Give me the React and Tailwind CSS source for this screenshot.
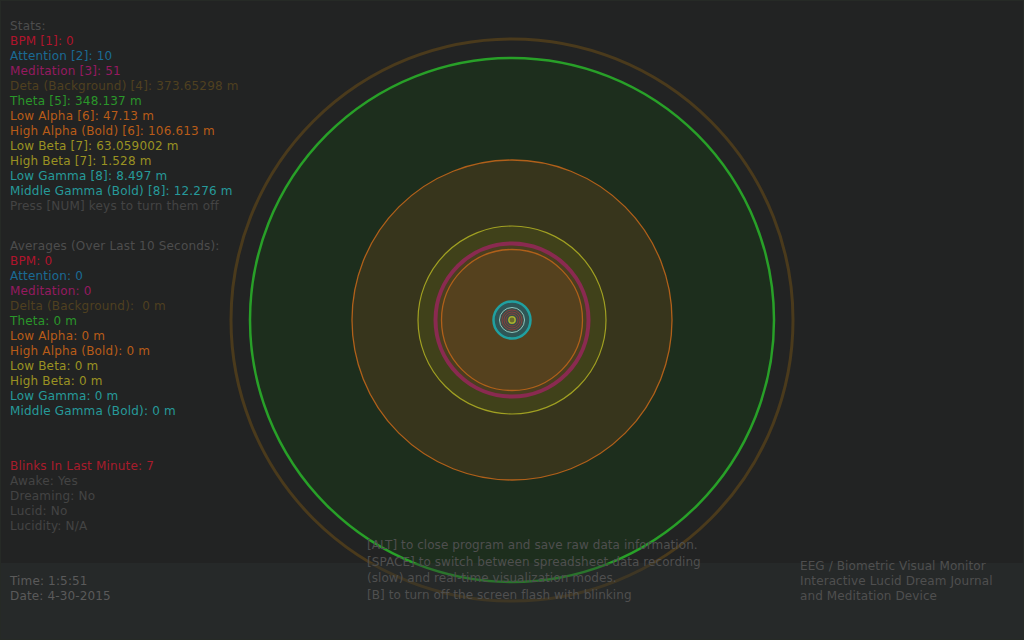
import React from "react";

const stats = [
  ["Stats:", "text-[#4d4d4d]"],
  ["BPM [1]: 0", "text-[#b0142c]"],
  ["Attention [2]: 10", "text-[#1a6a94]"],
  ["Meditation [3]: 51", "text-[#951a60]"],
  ["Deta (Background) [4]: 373.65298 m", "text-[#4f4020]"],
  ["Theta [5]: 348.137 m", "text-[#2a962a]"],
  ["Low Alpha [6]: 47.13 m", "text-[#b85c18]"],
  ["High Alpha (Bold) [6]: 106.613 m", "text-[#b85c18]"],
  ["Low Beta [7]: 63.059002 m", "text-[#9a9222]"],
  ["High Beta [7]: 1.528 m", "text-[#9a9222]"],
  ["Low Gamma [8]: 8.497 m", "text-[#269a9a]"],
  ["Middle Gamma (Bold) [8]: 12.276 m", "text-[#269a9a]"],
  ["Press [NUM] keys to turn them off", "text-[#444444]"],
];

const avgs = [
  ["Averages (Over Last 10 Seconds):", "text-[#4d4d4d]"],
  ["BPM: 0", "text-[#b0142c]"],
  ["Attention: 0", "text-[#1a6a94]"],
  ["Meditation: 0", "text-[#951a60]"],
  ["Delta (Background):  0 m", "text-[#4f4020]"],
  ["Theta: 0 m", "text-[#2a962a]"],
  ["Low Alpha: 0 m", "text-[#b85c18]"],
  ["High Alpha (Bold): 0 m", "text-[#b85c18]"],
  ["Low Beta: 0 m", "text-[#9a9222]"],
  ["High Beta: 0 m", "text-[#9a9222]"],
  ["Low Gamma: 0 m", "text-[#269a9a]"],
  ["Middle Gamma (Bold): 0 m", "text-[#269a9a]"],
];

const blinks = [
  ["Blinks In Last Minute: 7", "text-[#a81c2c]"],
  ["Awake: Yes", "text-[#444444]"],
  ["Dreaming: No", "text-[#444444]"],
  ["Lucid: No", "text-[#444444]"],
  ["Lucidity: N/A", "text-[#444444]"],
];

function Block({ items, className = "" }) {
  return (
    <div className={"flex flex-col tracking-[0.18px] " + className}>
      {items.map(([t, c], i) => (
        <div key={i} className={"h-[15px] leading-[15px] whitespace-pre " + c}>
          {t}
        </div>
      ))}
    </div>
  );
}

function Rings() {
  const cx = 512,
    cy = 320;
  return (
    <svg className="absolute inset-0" width="1024" height="640" viewBox="0 0 1024 640">
      <circle cx={cx} cy={cy} r="281" fill="none" stroke="#4a3a1c" strokeWidth="3" />
      <circle cx={cx} cy={cy} r="262" fill="#1d2e1d" stroke="#28a028" strokeWidth="2.5" />
      <circle cx={cx} cy={cy} r="160" fill="#37351c" stroke="#b0601a" strokeWidth="1.3" />
      <circle cx={cx} cy={cy} r="94" fill="#40411a" stroke="#a0a022" strokeWidth="1.2" />
      <circle cx={cx} cy={cy} r="76.5" fill="#4a3e1f" stroke="#8a2a50" strokeWidth="4" />
      <circle cx={cx} cy={cy} r="70.5" fill="#55411e" stroke="#b0601a" strokeWidth="1.3" />
      <circle cx={cx} cy={cy} r="18.5" fill="#2e5656" stroke="#20a0a0" strokeWidth="2.5" />
      <circle cx={cx} cy={cy} r="12.5" fill="#3a4e48" stroke="#8cc8c0" strokeWidth="1" />
      <circle cx={cx} cy={cy} r="10" fill="none" stroke="#9a3a38" strokeWidth="0.8" />
      <circle cx={cx} cy={cy} r="8" fill="none" stroke="#9a3a38" strokeWidth="0.8" />
      <circle cx={cx} cy={cy} r="6" fill="none" stroke="#9a3a38" strokeWidth="0.8" />
      <circle cx={cx} cy={cy} r="3.2" fill="#6a6a2a" stroke="#a8b030" strokeWidth="1.5" />
    </svg>
  );
}

export default function App() {
  return (
    <div
      className="relative w-[1024px] h-[640px] overflow-hidden bg-[#222323] text-[12px]"
      style={{ fontFamily: '"DejaVu Sans", Verdana, sans-serif' }}
    >
      <Rings />
      <div className="absolute left-0 right-0 bottom-0 h-[77px] bg-[#2c3232]/40" />
      <div className="absolute inset-0 border border-[#262a26] pointer-events-none" />
      <div className="relative flex flex-col h-full pl-[10px] pt-[19px]">
        <Block items={stats} />
        <Block items={avgs} className="mt-[25px]" />
        <Block items={blinks} className="mt-[40px]" />
        <div className="flex mt-[3px]">
          <div className="w-[357px] flex flex-col pt-[37px] text-[#5a5a5a] tracking-[0.15px]">
            <div className="h-[15px] leading-[15px]">Time: 1:5:51</div>
            <div className="h-[15px] leading-[15px]">Date: 4-30-2015</div>
          </div>
          <div className="w-[433px] flex flex-col text-[#4f4f4f] tracking-[0.06px]">
            <div className="h-[16.7px] leading-[16.7px]">[ALT] to close program and save raw data information.</div>
            <div className="h-[16.7px] leading-[16.7px]">[SPACE] to switch between spreadsheet data recording</div>
            <div className="h-[16.7px] leading-[16.7px]">(slow) and real-time visualization modes.</div>
            <div className="h-[16.7px] leading-[16.7px]">[B] to turn off the screen flash with blinking</div>
          </div>
          <div className="flex flex-col pt-[22px] text-[#4f4f4f] tracking-[0.1px]">
            <div className="h-[15px] leading-[15px]">EEG / Biometric Visual Monitor</div>
            <div className="h-[15px] leading-[15px]">Interactive Lucid Dream Journal</div>
            <div className="h-[15px] leading-[15px]">and Meditation Device</div>
          </div>
        </div>
      </div>
    </div>
  );
}
